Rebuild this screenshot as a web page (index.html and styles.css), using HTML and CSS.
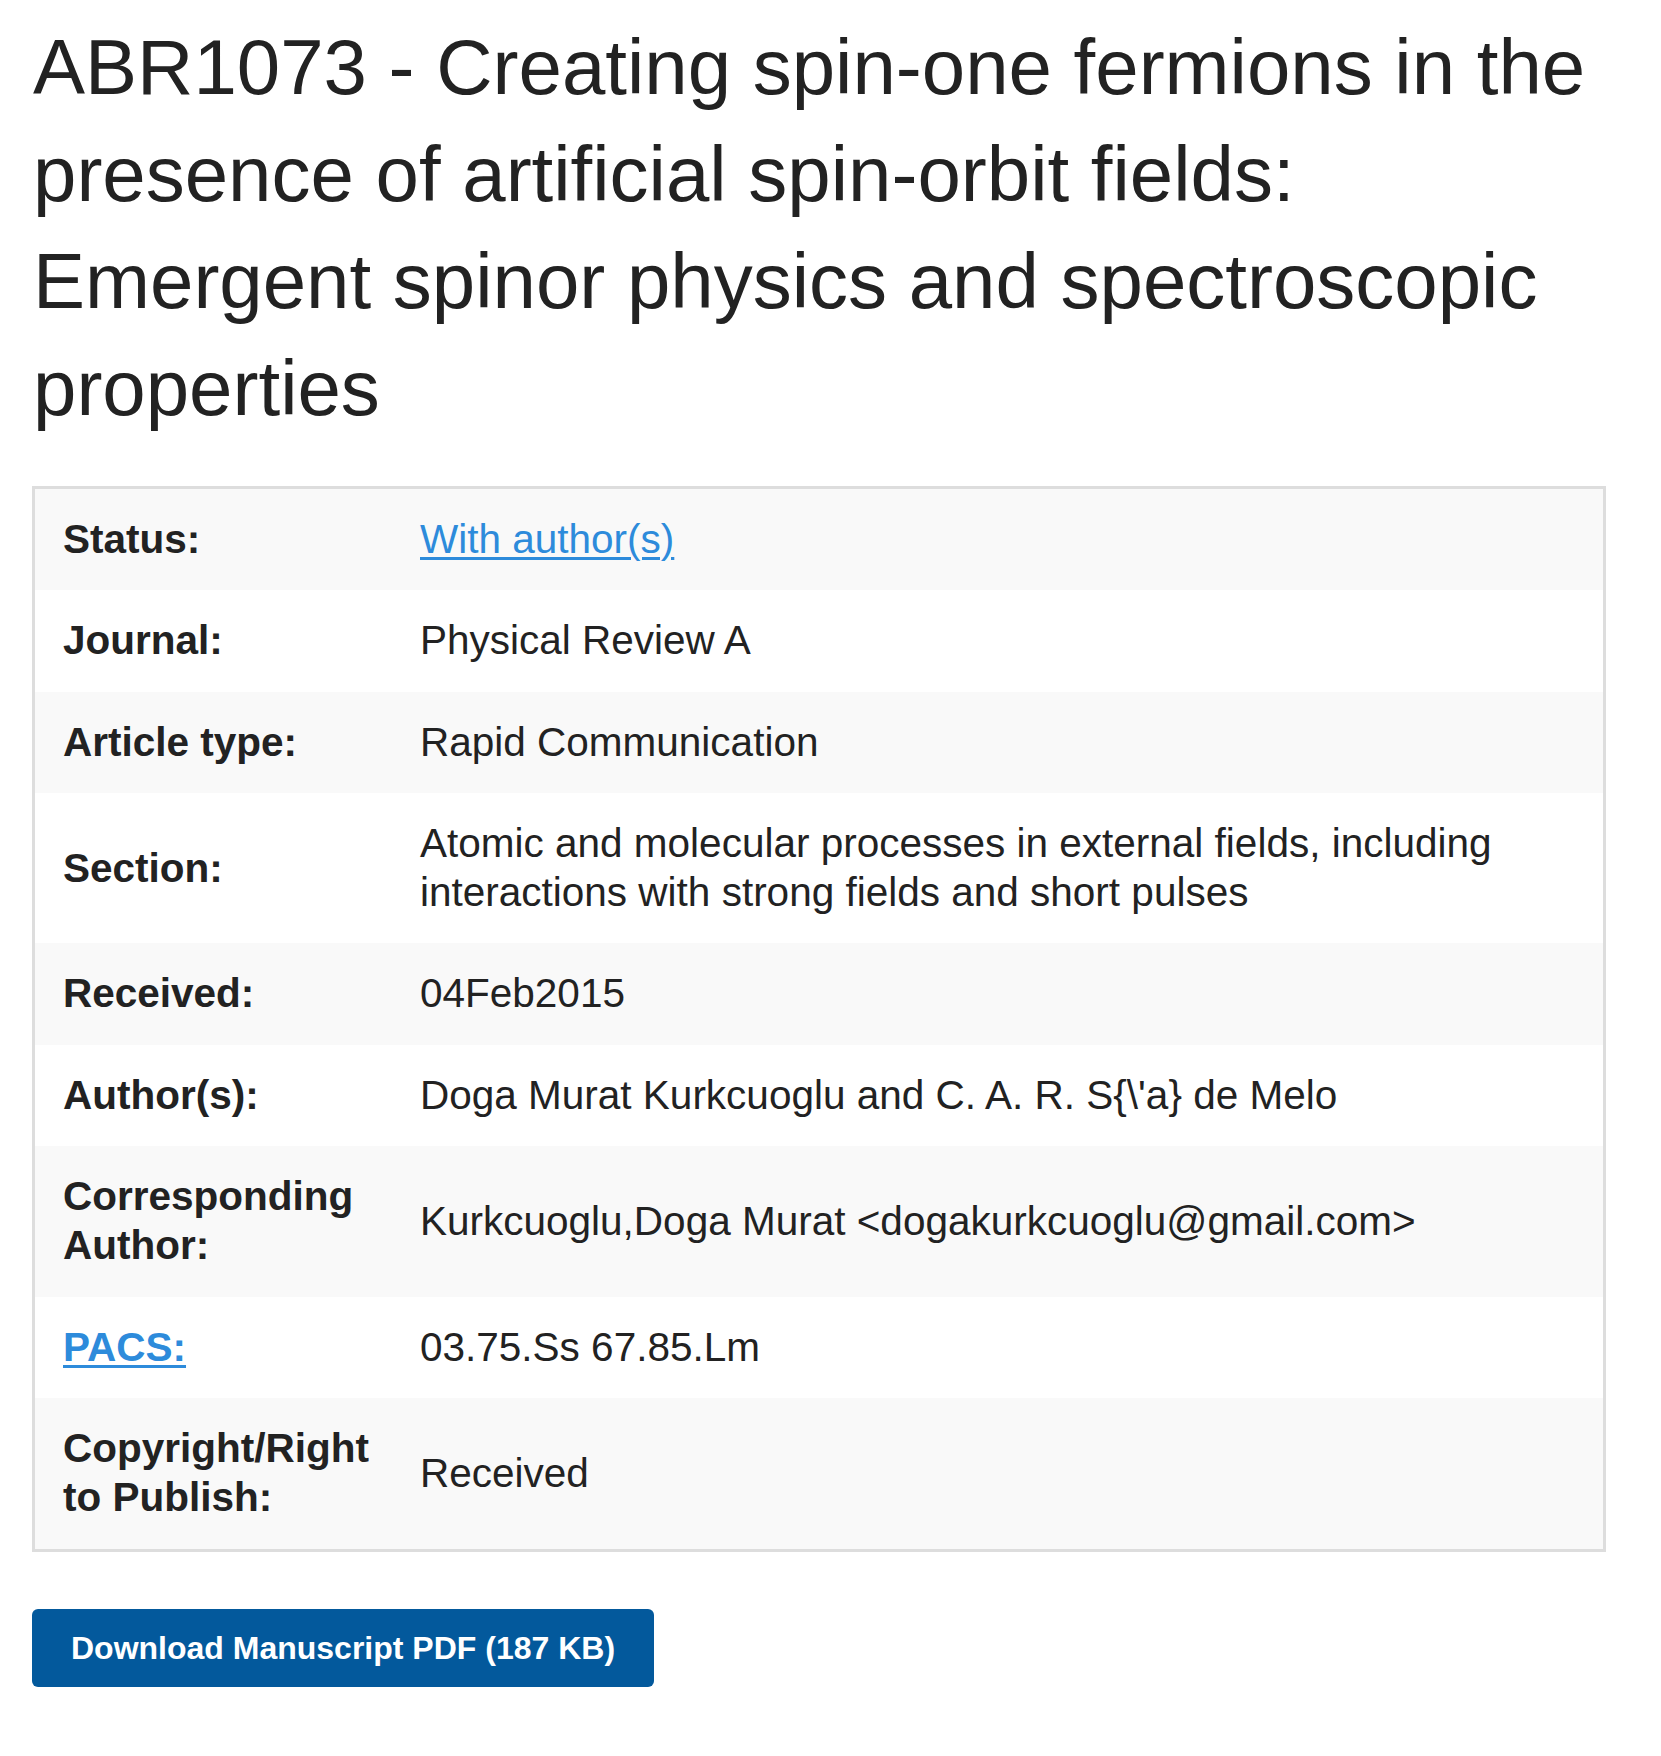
FILE: index.html
```html
<!DOCTYPE html>
<html lang="en">
<head>
<meta charset="utf-8">
<title>ABR1073</title>
<link rel="stylesheet" href="styles.css">
</head>
<body>
<div class="page">
  <h1 class="title">ABR1073 - Creating spin-one fermions in the presence of artificial spin-orbit fields: Emergent spinor physics and spectroscopic properties</h1>
  <table class="info">
    <colgroup><col class="col-label"><col class="col-value"></colgroup>
    <tbody>
      <tr><th>Status:</th><td><a href="#" class="link">With author(s)</a></td></tr>
      <tr><th>Journal:</th><td>Physical Review A</td></tr>
      <tr><th>Article type:</th><td>Rapid Communication</td></tr>
      <tr><th>Section:</th><td>Atomic and molecular processes in external fields, including interactions with strong fields and short pulses</td></tr>
      <tr><th>Received:</th><td>04Feb2015</td></tr>
      <tr><th>Author(s):</th><td>Doga Murat Kurkcuoglu and C. A. R. S{\'a} de Melo</td></tr>
      <tr><th>Corresponding Author:</th><td>Kurkcuoglu,Doga Murat &lt;dogakurkcuoglu@gmail.com&gt;</td></tr>
      <tr><th><a href="#" class="link">PACS:</a></th><td>03.75.Ss 67.85.Lm</td></tr>
      <tr><th>Copyright/Right to Publish:</th><td>Received</td></tr>
    </tbody>
  </table>
  <a href="#" class="btn">Download Manuscript PDF (187 KB)</a>
</div>
</body>
</html>
```

FILE: styles.css
```css
html, body {
  margin: 0;
  padding: 0;
  background: #ffffff;
}
body {
  font-family: "Liberation Sans", Arial, sans-serif;
  color: #222222;
}
.page {
  padding: 14px 0 60px 32px;
  width: 1574px;
}
.title {
  margin: 0 0 44px 1px;
  font-size: 78px;
  line-height: 107px;
  font-weight: normal;
  color: #222222;
}
.info {
  width: 1574px;
  table-layout: fixed;
  border-collapse: separate;
  border-spacing: 0;
  border: 3px solid #dddddd;
  font-size: 40.5px;
  line-height: 49.3px;
}
.col-label { width: 357px; }
.info th,
.info td {
  padding: 26px 28px;
  vertical-align: middle;
  text-align: left;
}
.info th {
  font-weight: bold;
  padding-right: 8px;
}
.info tr:nth-child(odd) th,
.info tr:nth-child(odd) td {
  background: #f9f9f9;
}
.info tr:nth-child(even) th,
.info tr:nth-child(even) td {
  background: #ffffff;
}
.link {
  color: #2d8bdb;
  text-decoration: underline;
  text-decoration-thickness: 3px;
  text-underline-offset: 4px;
}
.btn {
  display: inline-block;
  margin-top: 57px;
  height: 78px;
  line-height: 78px;
  padding: 0 39px;
  background: #03599c;
  color: #ffffff;
  font-size: 32px;
  font-weight: bold;
  border-radius: 6px;
  text-decoration: none;
}
```
